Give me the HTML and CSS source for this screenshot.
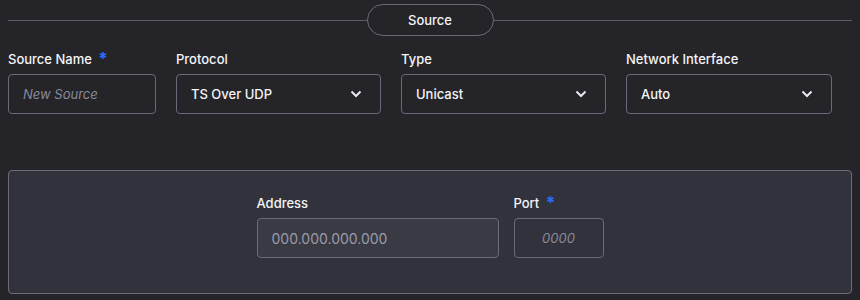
FILE: index.html
```html
<!DOCTYPE html>
<html>
<head>
    <meta charset="UTF-8">
    <title>Source</title>
    <link rel="stylesheet" href="styles.css">
</head>
<body>
    <div class="page">
        <div class="section-title">
            <span class="rule"></span>
            <span class="pill">Source</span>
            <span class="rule"></span>
        </div>

        <div class="fields">
            <div class="field">
                <label>Source Name <span class="req">*</span></label>
                <div class="box placeholder">New Source</div>
            </div>
            <div class="field">
                <label>Protocol</label>
                <div class="box select">
                    <span>TS Over UDP</span>
                    <svg class="chev" width="12" height="8" viewBox="0 0 12 8"><path d="M1.5 1.5 L6 6 L10.5 1.5" fill="none" stroke="#e8e8ee" stroke-width="2"/></svg>
                </div>
            </div>
            <div class="field">
                <label>Type</label>
                <div class="box select">
                    <span>Unicast</span>
                    <svg class="chev" width="12" height="8" viewBox="0 0 12 8"><path d="M1.5 1.5 L6 6 L10.5 1.5" fill="none" stroke="#e8e8ee" stroke-width="2"/></svg>
                </div>
            </div>
            <div class="field">
                <label>Network Interface</label>
                <div class="box select">
                    <span>Auto</span>
                    <svg class="chev" width="12" height="8" viewBox="0 0 12 8"><path d="M1.5 1.5 L6 6 L10.5 1.5" fill="none" stroke="#e8e8ee" stroke-width="2"/></svg>
                </div>
            </div>
        </div>

        <div class="panel">
            <div class="field address">
                <label>Address</label>
                <div class="box filled">000.000.000.000</div>
            </div>
            <div class="field port">
                <label>Port <span class="req">*</span></label>
                <div class="box placeholder center">0000</div>
            </div>
        </div>
    </div>
</body>
</html>
```

FILE: styles.css
```css
body {
    margin: 0;
    padding: 0;
    background-color: #242429;
    color: #f4f4f8;
    font-family: Inter, "Liberation Sans", sans-serif;
    font-size: 13px;
    font-weight: 500;
}
.page {
    padding: 4px 8px;
}
.section-title {
    display: flex;
    align-items: center;
}
.rule {
    flex: 1;
    height: 1px;
    background-color: #5d5c6b;
}
.pill {
    width: 125px;
    height: 30px;
    line-height: 30px;
    border: 1px solid #6b6a7a;
    border-radius: 16px;
    text-align: center;
}
.fields {
    display: grid;
    grid-template-columns: 148px 205px 205px 206px;
    column-gap: 20px;
    margin-top: 15px;
}
.field label {
    display: block;
    height: 16px;
    line-height: 16px;
    margin-bottom: 7px;
}
.req {
    color: #2f6bff;
    margin-left: 3px;
    font-size: 17px;
    font-weight: 700;
    line-height: 0;
    vertical-align: -1px;
}
.box {
    height: 38px;
    border: 1px solid #6b6a7a;
    border-radius: 4px;
    display: flex;
    align-items: center;
    padding: 0 14px;
    font-size: 13px;
}
.placeholder {
    color: #8a8a98;
    font-style: italic;
    font-weight: 400;
}
.select {
    justify-content: space-between;
}
.chev {
    margin-right: 4px;
}
.panel {
    margin-top: 56px;
    height: 124px;
    box-sizing: border-box;
    background-color: #32323c;
    border: 1px solid #6b6a7a;
    border-radius: 4px;
    display: flex;
    justify-content: center;
    gap: 15px;
    padding-top: 24px;
}
.address .box {
    width: 212px;
    background-color: #3a3a45;
}
.filled {
    color: #9a9aa8;
    font-weight: 400;
    font-size: 14px;
}
.port .box {
    width: 60px;
}
.center {
    justify-content: center;
}
```
